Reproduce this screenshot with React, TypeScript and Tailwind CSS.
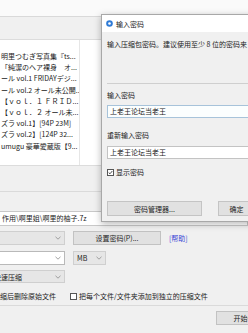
import React from 'react';

const listRows = [
  '明里つむぎ写真集『ts...',
  '「純潔のヘア裸身　オ...',
  'ール vol.1 FRIDAYデジ...',
  'ール vol.2 オール未公開...',
  '【ｖｏｌ．１ ＦＲＩＤ...',
  '【ｖｏｌ．２ オール未...',
  'ズラ vol.1】[94P 23M]',
  'ズラ vol.2】[124P 32...',
  'umugu 豪華愛蔵版【9...',
];

function Chevron() {
  return (
    <svg width="6" height="4" viewBox="0 0 6 4" className="shrink-0">
      <polyline points="0.5,0.8 3,3.2 5.5,0.8" fill="none" stroke="#8a8a8a" strokeWidth="0.8" />
    </svg>
  );
}

function Combo({ text = '', white = false, w }: { text?: string; white?: boolean; w: string }) {
  return (
    <div
      className={`${w} h-full flex items-center justify-between pl-[3px] pr-[3px] border ${
        white ? 'bg-white border-[#b9b9b9]' : 'bg-[#e6e6e6] border-[#cfcfcf]'
      }`}
    >
      <span className="whitespace-nowrap">{text}</span>
      <Chevron />
    </div>
  );
}

function Box({ checked = false }: { checked?: boolean }) {
  return (
    <span className="w-[7px] h-[7px] shrink-0 border border-[#555] bg-white flex items-center justify-center">
      {checked && (
        <svg width="5" height="5" viewBox="0 0 5 5">
          <polyline points="0.7,2.6 2,3.8 4.3,1" fill="none" stroke="#222" strokeWidth="0.8" />
        </svg>
      )}
    </span>
  );
}

export default function App() {
  return (
    <div className="relative w-[248px] h-[333px] overflow-hidden bg-[#f0f0f0] text-[7px] leading-[10px] text-[#222] font-['Noto_Sans_CJK_SC','Noto_Sans_CJK_JP',sans-serif]">
      {/* background compression window */}
      <div className="h-[17px] bg-[#fafafa] border-b border-[#d9d9d9]" />
      <div className="h-[22px]" />
      <div className="h-[127px] bg-white border-y border-[#dcdcdc] flex">
        <div className="w-[80px] border-r border-[#e6e6e6] pt-[11px] font-['Noto_Sans_CJK_JP',sans-serif]">
          {listRows.map((r) => (
            <div key={r} className="h-[11.2px] leading-[11.2px] pl-[1px] whitespace-nowrap overflow-hidden">
              {r}
            </div>
          ))}
        </div>
      </div>
      <div className="h-[26px] border-b border-[#dadada]" />
      <div className="h-[19px]" />
      <div className="h-[15px] -ml-px bg-white border border-[#c8c8c8] pl-[2px] leading-[13px] whitespace-nowrap">
        作用\啊里姐\啊里的柚子.7z
      </div>

      <div className="mt-[5px] h-[14px] -ml-[10px] flex items-center gap-[8px]">
        <Combo w="w-[75px]" />
        <div className="w-[88px] h-full bg-[#e1e1e1] border border-[#c2c2c2] flex items-center justify-center whitespace-nowrap">
          设置密码(P)...
        </div>
        <span className="text-[#3a46d6] whitespace-nowrap">[帮助]</span>
      </div>
      <div className="mt-[6px] h-[14px] -ml-[10px] flex items-center gap-[8px]">
        <Combo w="w-[75px]" white />
        <Combo w="w-[33px]" text="MB" />
      </div>
      <div className="mt-[5px] h-[13px] -ml-[10px] flex items-center">
        <Combo w="w-[75px]" text="快速压缩" />
      </div>
      <div className="mt-[8px] h-[10px] -ml-[17px] flex items-center whitespace-nowrap">
        <div className="w-[87px] flex items-center gap-[3px]">
          <Box />
          <span>压缩后删除原始文件</span>
        </div>
        <Box />
        <span className="ml-[2px]">把每个文件/文件夹添加到独立的压缩文件</span>
      </div>
      <div className="mt-[4px] border-t border-[#dadada]" />
      <div className="mt-[5px] ml-[216px] w-[58px] h-[14px] bg-[#e1e1e1] border border-[#c2c2c2] flex items-center justify-center whitespace-nowrap">
        开始(S)
      </div>

      {/* password dialog */}
      <div className="absolute left-[101px] top-[14px] w-[160px] border border-[#a8a8a8] bg-[#f0f0f0] shadow-[0_2px_7px_rgba(0,0,0,0.28)]">
        <div className="h-[17px] bg-white flex items-center pl-[4px] gap-[3px]">
          <svg width="7" height="7" viewBox="0 0 7 7">
            <circle cx="3.5" cy="3.5" r="3.3" fill="#2f7bd6" />
            <circle cx="3.5" cy="3.5" r="1.3" fill="#fff" />
          </svg>
          <span className="whitespace-nowrap">输入密码</span>
        </div>
        <div className="px-[5px] pb-[5px]">
          <div className="mt-[7px] whitespace-nowrap">输入压缩包密码。建议使用至少 8 位的密码来</div>
          <div className="mt-[34px] h-px bg-[#cfcfcf] -mr-[5px]" />
          <div className="mt-[6px] whitespace-nowrap">输入密码</div>
          <div className="mt-[5px] h-[13px] -mr-[5px] bg-[#fbfefe] border border-[#a7c3da] pl-[2px] leading-[11px] whitespace-nowrap">
            上老王论坛当老王
          </div>
          <div className="mt-[12px] whitespace-nowrap">重新输入密码</div>
          <div className="mt-[6px] h-[13px] -mr-[5px] bg-white border border-[#c3c3c3] pl-[2px] leading-[11px] whitespace-nowrap">
            上老王论坛当老王
          </div>
          <div className="mt-[8px] flex items-center gap-[2px] whitespace-nowrap">
            <Box checked />
            <span>显示密码</span>
          </div>
          <div className="mt-[24px] h-[15px] flex gap-[16px]">
            <div className="w-[97px] h-full bg-[#e1e1e1] border border-[#c4c4c4] flex items-center justify-center whitespace-nowrap">
              密码管理器...
            </div>
            <div className="w-[38px] h-full bg-[#e1e1e1] border border-[#c4c4c4] flex items-center justify-center whitespace-nowrap">
              确定
            </div>
          </div>
        </div>
      </div>
    </div>
  );
}
